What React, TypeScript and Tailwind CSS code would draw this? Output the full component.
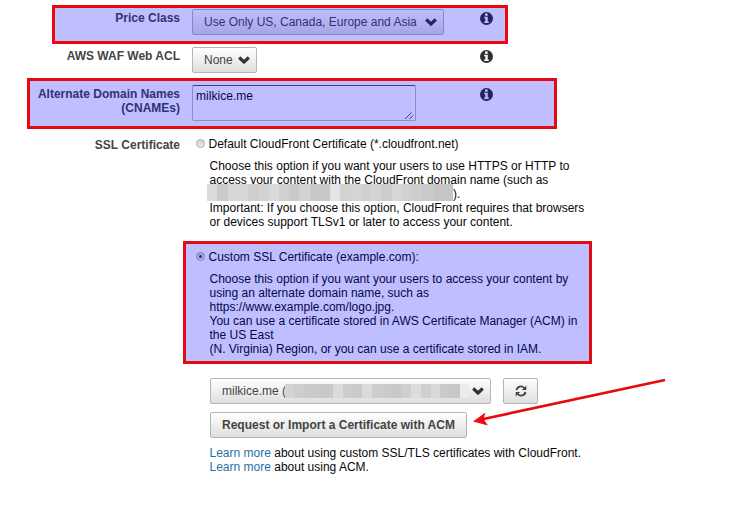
import type { ReactNode } from 'react';

const button =
  'flex items-center rounded-[2px] border border-[#b5b5b5] bg-linear-to-b from-white to-[#dedede] text-[#444]';

function Info() {
  return (
    <svg viewBox="0 0 13 13" className="size-[13px] shrink-0">
      <circle cx="6.5" cy="6.5" r="6.5" fill="#2f2f2f" />
      <path d="M5 1.600h2.700v2.200H5zM4.200 4.700h3.500v4.700h1.100V11H4.200V9.400h1.100V6.300H4.200z" fill="#fff" />
    </svg>
  );
}

function Chevron() {
  return (
    <svg viewBox="0 0 12 8" className="h-2 w-3 shrink-0">
      <path d="M1.200 1.500 6 6l4.800-4.500" fill="none" stroke="#333" strokeWidth="3.200" />
    </svg>
  );
}

function Refresh() {
  return (
    <svg viewBox="0 0 12 12" className="size-3" fill="none" stroke="#444" strokeWidth="1.900">
      <path d="M1.500 5A4.400 4.400 0 0 1 9.200 3M10.500 7A4.400 4.400 0 0 1 2.800 9" />
      <path d="M11.300.6V5H6.900zM.7 11.400V7h4.400z" fill="#444" stroke="none" />
    </svg>
  );
}

function Highlight({ className, children }: { className: string; children: ReactNode }) {
  return (
    <section className={`relative flex shrink-0 items-start border-3 ${className}`}>
      {children}
      <div className="absolute inset-0 bg-[#0000ff]/25" />
    </section>
  );
}

function Radio({ checked = false }: { checked?: boolean }) {
  return (
    <span className="relative -top-px flex size-[9px] shrink-0 items-center justify-center rounded-full border border-[#aaa] bg-linear-to-b from-[#d0d0d0] to-[#ededed]">
      {checked && <span className="size-[3px] rounded-full bg-[#444]" />}
    </span>
  );
}

function Mosaic({ colors, className }: { colors: string[]; className: string }) {
  return (
    <div className={`flex shrink-0 ${className}`}>
      {colors.map((c, i) => (
        <span key={i} className="flex-1" style={{ backgroundColor: c }} />
      ))}
    </div>
  );
}

const domainMask = [
  '#dbdbdb', '#cbcbcb', '#d7d7d7', '#d7d7d7', '#cfcfcf', '#d2d2d2', '#dadada', '#d0d0d0',
  '#cacaca', '#d3d3d3', '#c9c9c9', '#c9c9c9', '#e5e5e5', '#d3d3d3', '#d5d5d5', '#d0d0d0',
  '#d4d4d4', '#cdcdcd', '#d7d7d7', '#d1d1d1', '#cecece', '#cacaca', '#c6c6c6', '#c6c6c6',
];
const certMask = [
  '#d3d3d3', '#cecece', '#cbcbcb', '#c9c9c9', '#c9c9c9', '#dadada', '#cdcdcd', '#cbcbcb',
  '#dbdbdb', '#cdcdcd', '#cbcbcb', '#c9c9c9', '#cfcfcf', '#dddddd', '#cfcfcf', '#dadada',
  '#cacaca', '#c8c8c8', '#ececec',
];

export default function App() {
  return (
    <main className="relative flex h-[506px] w-[731px] flex-col overflow-hidden bg-white pt-[5px] font-['Liberation_Sans',Arial,sans-serif] text-[12px] leading-[14px] whitespace-nowrap text-[#080808]">
      <Highlight className="ml-[52px] h-[39px] w-[456px] border-[#ee0610] pt-px">
        <div className="mt-[2px] w-[125px] text-right font-bold text-[#444]">Price Class</div>
        <div className={`${button} ml-3 h-[26px] w-[252px] justify-between pr-[6px] pl-[11px]`}>
          Use Only US, Canada, Europe and Asia
          <Chevron />
        </div>
        <div className="mt-[3px] ml-9">
          <Info />
        </div>
      </Highlight>

      <div className="mt-[3px] flex h-[26px] shrink-0 items-start">
        <div className="mt-[2px] w-[180px] text-right font-bold text-[#444]">AWS WAF Web ACL</div>
        <div className={`${button} ml-3 h-[26px] w-[65px] justify-between pr-[6px] pl-[11px]`}>
          None
          <Chevron />
        </div>
        <div className="mt-[3px] ml-[223px]">
          <Info />
        </div>
      </div>

      <Highlight className="mt-[5px] ml-[27px] h-[51px] w-[530px] border-[#e50a12] pt-[4px]">
        <div className="mt-[2px] w-[150px] text-right font-bold text-[#444]">
          Alternate Domain Names
          <br />
          (CNAMEs)
        </div>
        <div className="ml-3 flex h-9 w-[224px] items-start justify-between rounded-[2px] border border-[#bbb] border-t-[#555] bg-white pt-[3px] pl-[3px]">
          <span className="tracking-[0.03px]">milkice.me</span>
          <svg viewBox="0 0 9 8" className="mr-px h-2 w-[9px] self-end" stroke="#555" strokeWidth="1">
            <path d="M0 7 6.500.5M4.500 7l3.500-3.500" />
          </svg>
        </div>
        <div className="mt-[3px] ml-16">
          <Info />
        </div>
      </Highlight>

      <div className="mt-[8px] flex h-[14px] shrink-0 items-center">
        <div className="mt-[2px] w-[180px] text-right font-bold text-[#444]">SSL Certificate</div>
        <div className="ml-4 flex items-center gap-[3.500px]">
          <Radio />
          Default CloudFront Certificate (*.cloudfront.net)
        </div>
      </div>
      <div className="mt-[8px] ml-[209.500px] h-[70px] shrink-0">
        <div>Choose this option if you want your users to use HTTPS or HTTP to</div>
        <div>access your content with the CloudFront domain name (such as</div>
        <div className="flex h-[14px] items-center">
          <Mosaic colors={domainMask} className="-mt-[3px] -ml-[2.500px] h-[17px] w-[246px]" />
          <span>).</span>
        </div>
        <div>Important: If you choose this option, CloudFront requires that browsers</div>
        <div>or devices support TLSv1 or later to access your content.</div>
      </div>

      <Highlight className="mt-[12px] ml-[183px] h-[123px] w-[409px] flex-col border-[#e00c14]">
        <div className="mt-[6px] ml-[10px] flex h-[14px] items-center gap-[3.500px]">
          <Radio checked />
          Custom SSL Certificate (example.com):
        </div>
        <div className="mt-[8px] ml-[23.500px]">
          <div>Choose this option if you want your users to access your content by</div>
          <div>using an alternate domain name, such as</div>
          <div>https://www.example.com/logo.jpg.</div>
          <div>You can use a certificate stored in AWS Certificate Manager (ACM) in</div>
          <div>the US East</div>
          <div>(N. Virginia) Region, or you can use a certificate stored in IAM.</div>
        </div>
      </Highlight>

      <div className="mt-[14px] ml-[210px] flex shrink-0 gap-3">
        <div className={`${button} h-[26px] w-[281px] pr-[6px] pl-[11px]`}>
          <span className="w-[62.500px]">milkice.me (</span>
          <Mosaic colors={certMask} className="h-[14px] w-[185px]" />
          <span className="ml-auto">
            <Chevron />
          </span>
        </div>
        <div className={`${button} h-[26px] w-[35px] justify-center`}>
          <Refresh />
        </div>
      </div>
      <div className={`${button} mt-2 ml-[210px] h-[26px] w-[257px] shrink-0 justify-center font-bold`}>
        Request or Import a Certificate with ACM
      </div>
      <div className="mt-[8px] ml-[209.500px]">
        <div>
          <span className="text-[#1f71a5]">Learn more</span> about using custom SSL/TLS certificates with CloudFront.
        </div>
        <div>
          <span className="text-[#1f71a5]">Learn more</span> about using ACM.
        </div>
      </div>

      <svg viewBox="0 0 196 50" className="absolute top-[377px] left-[471px] h-[50px] w-[196px]">
        <path d="M10 42.500 194 3" stroke="#e8090d" strokeWidth="2.700" />
        <path d="M2 44.500 14.500 35.500 12.500 42 17 48.500Z" fill="#f00b0e" />
      </svg>
    </main>
  );
}
